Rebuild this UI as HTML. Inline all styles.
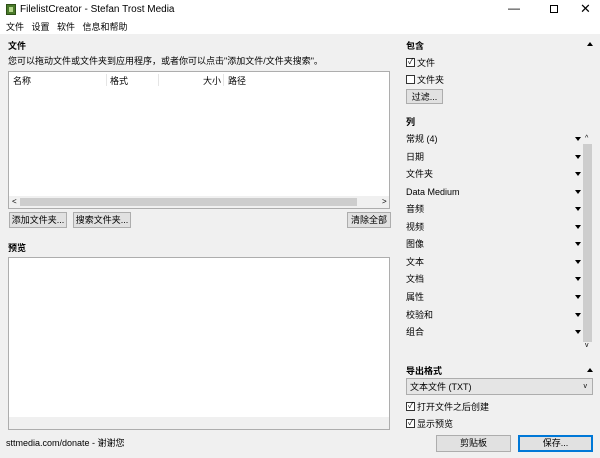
<!DOCTYPE html>
<html><head><meta charset="utf-8"><style>
*{margin:0;padding:0;box-sizing:border-box}
body{width:600px;height:458px;background:#f0f0f0;font-family:"Liberation Sans","Noto Sans CJK SC",sans-serif;font-size:9px;line-height:12px;color:#000;position:relative;overflow:hidden}
.a{position:absolute;white-space:nowrap}
.btn{position:absolute;background:#e1e1e1;border:1px solid #adadad;text-align:center;line-height:14px}
.box{position:absolute;background:#fff;border:1px solid #adadad}
.cb{display:inline-block;width:9px;height:9px;border:1px solid #333;background:#fff;vertical-align:-1px;margin-right:2px;position:relative}
.b{font-weight:bold}
.tri{position:absolute;left:575px;width:0;height:0;border-left:3px solid transparent;border-right:3px solid transparent;border-top:4px solid #000}
</style></head><body>
<div class="a" style="left:0;top:0;width:600px;height:34px;background:#fff"></div>
<div class="a" style="left:6px;top:4px;width:10px;height:11px;background:#4a7a2a;border:1px solid #2d4f17"><div style="margin:2px;width:4px;height:5px;background:#b5d68c"></div></div>
<div class="a" style="left:20px;top:3px;font-size:10px;line-height:14px">FilelistCreator - Stefan Trost Media</div>
<div class="a" style="left:508px;top:1px;font-size:12px;line-height:14px">—</div>
<div class="a" style="left:550px;top:5px;width:8px;height:8px;border:1px solid #000"></div>
<div class="a" style="left:580px;top:1px;font-size:13px;line-height:16px">✕</div>
<div class="a" style="left:6px;top:21px">文件 &nbsp; 设置 &nbsp; 软件 &nbsp; 信息和帮助</div>
<div class="a b" style="left:8px;top:40px">文件</div>
<div class="a" style="left:8px;top:55px">您可以拖动文件或文件夹到应用程序，或者你可以点击"添加文件/文件夹搜索"。</div>
<div class="box" style="left:8px;top:71px;width:382px;height:138px"></div>
<div class="a" style="left:13px;top:75px">名称</div>
<div class="a" style="left:106px;top:74px;height:12px;border-left:1px solid #e5e5e5"></div>
<div class="a" style="left:110px;top:75px">格式</div>
<div class="a" style="left:158px;top:74px;height:12px;border-left:1px solid #e5e5e5"></div>
<div class="a" style="left:203px;top:75px">大小</div>
<div class="a" style="left:223px;top:74px;height:12px;border-left:1px solid #e5e5e5"></div>
<div class="a" style="left:228px;top:75px">路径</div>
<div class="a" style="left:9px;top:196px;width:380px;height:12px;background:#f0f0f0"></div>
<div class="a" style="left:20px;top:198px;width:337px;height:8px;background:#cdcdcd"></div>
<div class="a" style="left:12px;top:196px;font-size:8px">&lt;</div>
<div class="a" style="left:382px;top:196px;font-size:8px">&gt;</div>
<div class="btn" style="left:9px;top:212px;width:58px;height:16px">添加文件夹...</div>
<div class="btn" style="left:73px;top:212px;width:58px;height:16px">搜索文件夹...</div>
<div class="btn" style="left:347px;top:212px;width:44px;height:16px">清除全部</div>
<div class="a b" style="left:8px;top:242px">预览</div>
<div class="box" style="left:8px;top:257px;width:382px;height:173px"></div>
<div class="a" style="left:9px;top:417px;width:380px;height:12px;background:#f0f0f0"></div>
<div class="a" style="left:9px;top:258px;width:376px;height:159px;background:#fff"></div>
<div class="a" style="left:6px;top:437px">sttmedia.com/donate - 谢谢您</div>
<div class="a b" style="left:406px;top:40px">包含</div>
<div class="a" style="left:587px;top:42px;border-left:3px solid transparent;border-right:3px solid transparent;border-bottom:4px solid #000;width:0"></div>
<div class="a" style="left:406px;top:57px"><span class="cb"><span style="position:absolute;left:1px;top:-3px;font-size:8px">✓</span></span>文件</div>
<div class="a" style="left:406px;top:74px"><span class="cb"></span>文件夹</div>
<div class="btn" style="left:406px;top:89px;width:37px;height:15px">过滤...</div>
<div class="a b" style="left:406px;top:116px">列</div>
<div class="a" style="left:583px;top:144px;width:9px;height:198px;background:#cdcdcd"></div>
<div class="a" style="left:585px;top:133px;font-size:7px">^</div>
<div class="a" style="left:585px;top:340px;font-size:7px">v</div>
<div class="a" style="left:406px;top:133px">常规 (4)</div><div class="tri" style="top:137px"></div>
<div class="a" style="left:406px;top:151px">日期</div><div class="tri" style="top:155px"></div>
<div class="a" style="left:406px;top:168px">文件夹</div><div class="tri" style="top:172px"></div>
<div class="a" style="left:406px;top:186px">Data Medium</div><div class="tri" style="top:190px"></div>
<div class="a" style="left:406px;top:203px">音频</div><div class="tri" style="top:207px"></div>
<div class="a" style="left:406px;top:221px">视频</div><div class="tri" style="top:225px"></div>
<div class="a" style="left:406px;top:238px">图像</div><div class="tri" style="top:242px"></div>
<div class="a" style="left:406px;top:256px">文本</div><div class="tri" style="top:260px"></div>
<div class="a" style="left:406px;top:273px">文档</div><div class="tri" style="top:277px"></div>
<div class="a" style="left:406px;top:291px">属性</div><div class="tri" style="top:295px"></div>
<div class="a" style="left:406px;top:309px">校验和</div><div class="tri" style="top:313px"></div>
<div class="a" style="left:406px;top:326px">组合</div><div class="tri" style="top:330px"></div>
<div class="a b" style="left:406px;top:365px">导出格式</div>
<div class="a" style="left:587px;top:368px;border-left:3px solid transparent;border-right:3px solid transparent;border-bottom:4px solid #000;width:0"></div>
<div class="a" style="left:406px;top:378px;width:187px;height:17px;background:#e5e5e5;border:1px solid #adadad;padding:2px 3px">文本文件 (TXT)<span style="position:absolute;right:5px;top:2px;font-size:7px">v</span></div>
<div class="a" style="left:406px;top:401px"><span class="cb"><span style="position:absolute;left:1px;top:-3px;font-size:8px">✓</span></span>打开文件之后创建</div>
<div class="a" style="left:406px;top:418px"><span class="cb"><span style="position:absolute;left:1px;top:-3px;font-size:8px">✓</span></span>显示预览</div>
<div class="btn" style="left:436px;top:435px;width:75px;height:17px;line-height:15px">剪贴板</div>
<div class="btn" style="left:518px;top:435px;width:75px;height:17px;line-height:13px;border:2px solid #0078d7">保存...</div>
</body></html>
